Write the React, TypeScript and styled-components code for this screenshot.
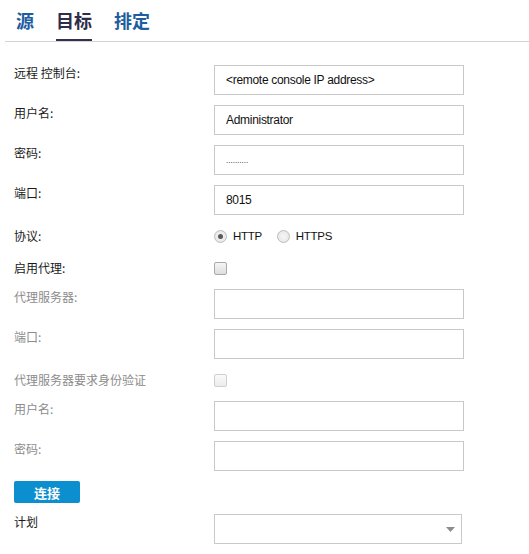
import React from "react";
import styled, { createGlobalStyle } from "styled-components";

const GlobalStyle = createGlobalStyle`
  body {
    margin: 0;
    background: #fff;
    font-family: "Liberation Sans", "Noto Sans CJK SC", sans-serif;
  }
`;

const tabs = ["源", "目标", "排定"];

function App() {
  return (
    <React.Fragment>
      <GlobalStyle />
      <TabBar>
        {tabs.map((t) => (
          <Tab key={t} active={t === "目标"}>
            {t}
          </Tab>
        ))}
      </TabBar>
      <Form>
        <Row>
          <Label>远程 控制台:</Label>
          <TextInput readOnly value="<remote console IP address>" />
        </Row>
        <Row>
          <Label>用户名:</Label>
          <TextInput readOnly value="Administrator" />
        </Row>
        <Row>
          <Label>密码:</Label>
          <TextInput readOnly value=".........." small />
        </Row>
        <Row>
          <Label>端口:</Label>
          <TextInput readOnly value="8015" />
        </Row>
        <CenterRow>
          <Label>协议:</Label>
          <RadioGroup>
            <Radio checked />
            <RadioText>HTTP</RadioText>
            <Radio />
            <RadioText>HTTPS</RadioText>
          </RadioGroup>
        </CenterRow>
        <CenterRow>
          <Label>启用代理:</Label>
          <Checkbox />
        </CenterRow>
        <Row>
          <Label disabled>代理服务器:</Label>
          <TextInput readOnly value="" />
        </Row>
        <Row>
          <Label disabled>端口:</Label>
          <TextInput readOnly value="" />
        </Row>
        <CenterRow>
          <Label disabled>代理服务器要求身份验证</Label>
          <Checkbox disabled />
        </CenterRow>
        <Row>
          <Label disabled>用户名:</Label>
          <TextInput readOnly value="" />
        </Row>
        <Row>
          <Label disabled>密码:</Label>
          <TextInput readOnly value="" />
        </Row>
        <ConnectButton>连接</ConnectButton>
        <Row>
          <Label>计划</Label>
          <SelectBox>
            <svg width="9" height="5" viewBox="0 0 9 5">
              <path d="M0 0 H9 L4.5 5 Z" fill="#8a8d93" />
            </svg>
          </SelectBox>
        </Row>
      </Form>
    </React.Fragment>
  );
}

const TabBar = styled.div`
  display: flex;
  gap: 22px;
  height: 42px;
  margin-left: 5px;
  padding-left: 11px;
  box-sizing: border-box;
  border-bottom: 1px solid #d3d4da;
`;

const Tab = styled.div<{ active?: boolean }>`
  height: 41px;
  box-sizing: border-box;
  display: flex;
  align-items: center;
  font-family: "Noto Sans CJK SC", sans-serif;
  font-size: 18px;
  font-weight: bold;
  color: ${(p) => (p.active ? "#2f2d47" : "#1e5e9f")};
  border-bottom: 2px solid ${(p) => (p.active ? "#33314d" : "transparent")};
`;

const Form = styled.div`
  padding: 23px 0 0 14px;
`;

const Row = styled.div`
  display: flex;
  align-items: flex-start;
  margin-bottom: 10px;
`;

const CenterRow = styled(Row)`
  align-items: center;
  height: 22px;
`;

const Label = styled.div<{ disabled?: boolean }>`
  width: 200px;
  font-family: "Noto Sans CJK SC", sans-serif;
  font-size: 12px;
  line-height: 16px;
  color: ${(p) => (p.disabled ? "#8c8c8c" : "#1a1a1a")};
`;

const TextInput = styled.input<{ small?: boolean }>`
  width: 250px;
  height: 30px;
  box-sizing: border-box;
  margin: 0;
  padding: 0 11px;
  border: 1px solid #c9c9c9;
  border-radius: 0;
  outline: none;
  background: #fff;
  font-family: "Liberation Sans", sans-serif;
  font-size: ${(p) => (p.small ? "8px" : "12px")};
  letter-spacing: ${(p) => (p.small ? "0" : "-0.3px")};
  color: #111;
`;

const RadioGroup = styled.div`
  display: flex;
  align-items: center;
`;

const Radio = styled.span<{ checked?: boolean }>`
  width: 13px;
  height: 13px;
  box-sizing: border-box;
  border-radius: 50%;
  border: 1px solid #bdbdbd;
  background: radial-gradient(circle, #f7f7f7 0%, #e2e2e2 100%);
  display: flex;
  align-items: center;
  justify-content: center;

  &::after {
    content: "";
    width: 5px;
    height: 5px;
    border-radius: 50%;
    background: ${(p) => (p.checked ? "#5a5a5a" : "transparent")};
  }
`;

const RadioText = styled.span`
  margin: 0 15px 0 6px;
  font-size: 11.5px;
  letter-spacing: -0.3px;
  color: #111;
`;

const Checkbox = styled.span<{ disabled?: boolean }>`
  width: 13px;
  height: 13px;
  box-sizing: border-box;
  border-radius: 2px;
  border: 1px solid ${(p) => (p.disabled ? "#cfcfcf" : "#a9a9a9")};
  background: ${(p) =>
    p.disabled
      ? "linear-gradient(#fafafa, #ececec)"
      : "linear-gradient(#f5f5f5, #dedede)"};
`;

const ConnectButton = styled.button`
  display: block;
  width: 66px;
  height: 22px;
  margin: 0 0 11px;
  padding: 0;
  border: none;
  border-radius: 2px;
  background: #0c8fcf;
  color: #fff;
  font-family: "Noto Sans CJK SC", sans-serif;
  font-size: 13px;
  font-weight: bold;
`;

const SelectBox = styled.div`
  width: 248px;
  height: 30px;
  box-sizing: border-box;
  border: 1px solid #c9c9c9;
  display: flex;
  align-items: center;
  justify-content: flex-end;
  padding-right: 6px;
`;

export default App;
